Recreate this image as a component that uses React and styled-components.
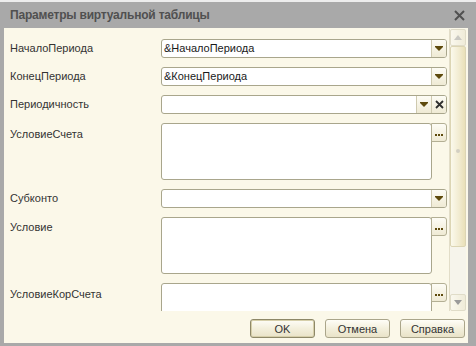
import React from "react";
import styled, { createGlobalStyle } from "styled-components";

const GlobalStyle = createGlobalStyle`
  html, body {
    margin: 0;
    padding: 0;
    background: #fff;
  }
  body {
    font-family: "Liberation Sans", Arial, sans-serif;
  }
`;

const Window = styled.div`
  width: 476px;
  height: 346px;
  box-sizing: border-box;
  background: #a9a9a9;
  border-top: 2px solid #ededed;
  display: flex;
  flex-direction: column;
`;

const TitleBar = styled.div`
  height: 26px;
  flex: none;
  display: flex;
  align-items: center;
  justify-content: space-between;
  padding: 0 11px 0 10px;
`;

const Title = styled.div`
  font-size: 12px;
  font-weight: bold;
  letter-spacing: -0.2px;
  color: #505050;
`;

const Body = styled.div`
  flex: 1;
  margin: 0 8px 3px 4px;
  background: #fbf8e9;
  display: flex;
  flex-direction: column;
  min-height: 0;
`;

const ScrollArea = styled.div`
  height: 282px;
  margin-top: 1px;
  display: flex;
  flex: none;
`;

const Form = styled.div`
  flex: 1;
  overflow: hidden;
  padding: 10px 2px 0 6px;
  display: grid;
  grid-template-columns: 151px 1fr;
  row-gap: 9px;
  align-content: start;
`;

const Label = styled.div`
  font-size: 11px;
  color: #333;
  line-height: 19px;
  height: 19px;
  padding-top: ${(p) => p.$pt || 0}px;
`;

const Combo = styled.div`
  height: 19px;
  box-sizing: border-box;
  border: 1px solid #a9a68c;
  border-radius: 3px;
  background: #fff;
  display: flex;
  overflow: hidden;
`;

const ComboText = styled.div`
  flex: 1;
  font-size: 11px;
  line-height: 17px;
  padding-left: 2px;
  color: #1a1a1a;
`;

const ComboButton = styled.div`
  width: 14px;
  border-left: 1px solid #cfcab0;
  background: linear-gradient(#fdfcf5, #efead4);
  display: flex;
  align-items: center;
  justify-content: center;
`;

const Arrow = styled.div`
  width: 0;
  height: 0;
  border-left: 4px solid transparent;
  border-right: 4px solid transparent;
  border-top: 4px solid #5e4a0c;
  border-bottom: 0;
  position: relative;
  &::before {
    content: "";
    position: absolute;
    left: -4px;
    top: -5px;
    width: 8px;
    height: 1px;
    background: #5e4a0c;
  }
`;

const MemoRow = styled.div`
  display: flex;
  align-items: flex-start;
`;

const Memo = styled.div`
  flex: 1;
  height: 57px;
  box-sizing: border-box;
  border: 1px solid #a9a68c;
  border-radius: 3px;
  background: #fff;
`;

const DotsButton = styled.div`
  width: 16px;
  height: 19px;
  box-sizing: border-box;
  margin-left: -1px;
  border: 1px solid #b3af94;
  border-radius: 0 3px 3px 0;
  background: linear-gradient(#fdfcf5, #efead4);
  display: flex;
  align-items: flex-end;
  justify-content: center;
  padding-bottom: 5px;
  gap: 1px;
`;

const Dot = styled.span`
  width: 2px;
  height: 2px;
  background: #5e4a0c;
`;

const Scrollbar = styled.div`
  width: 16px;
  margin-right: 2px;
  display: flex;
  flex-direction: column;
  background: #f6f4eb;
  border-left: 1px solid #e2ddc8;
`;

const ScrollButton = styled.div`
  height: 17px;
  flex: none;
  box-sizing: border-box;
  border: 1px solid #e0dcc8;
  border-radius: 2px;
  background: linear-gradient(90deg, #faf8ee, #efebd8);
  display: flex;
  align-items: center;
  justify-content: center;
`;

const ScrollArrow = styled.div`
  width: 0;
  height: 0;
  border-left: 4px solid transparent;
  border-right: 4px solid transparent;
  ${(p) =>
    p.$up
      ? "border-bottom: 5px solid #c9c8c2;"
      : "border-top: 5px solid #9a9a9a;"}
`;

const Thumb = styled.div`
  height: 201px;
  flex: none;
  box-sizing: border-box;
  border: 1px solid #dcd5b4;
  border-radius: 2px;
  background: linear-gradient(90deg, #fbf9ec, #f2ecd2 55%, #e9e0b8);
  display: flex;
  justify-content: center;
  padding-top: 102px;
`;

const Grip = styled.span`
  width: 4px;
  height: 4px;
  border-radius: 2px;
  background: #d2cfc2;
`;

const Track = styled.div`
  flex: 1;
`;

const ButtonBar = styled.div`
  display: flex;
  justify-content: flex-end;
  gap: 10px;
  padding: 8px 3px 0 0;
`;

const Button = styled.div`
  width: 65px;
  height: 19px;
  box-sizing: border-box;
  border: 1px solid ${(p) => (p.$default ? "#8e8868" : "#aaa58a")};
  box-shadow: ${(p) => (p.$default ? "inset 0 0 0 1px #d6cfaa" : "none")};
  border-radius: 3px;
  background: linear-gradient(#fefdf7, #f3efdc 50%, #e9e3c8);
  font-size: 11px;
  color: #333;
  display: flex;
  align-items: center;
  justify-content: center;
`;

const ClearX = () => (
  <svg width="9" height="9" viewBox="0 0 9 9">
    <path d="M1 1 L8 8 M8 1 L1 8" stroke="#2e2e2e" strokeWidth="1.8" />
  </svg>
);

const CloseX = () => (
  <svg width="11" height="11" viewBox="0 0 11 11">
    <path d="M1 1 L10 10 M10 1 L1 10" stroke="#505050" strokeWidth="2" />
  </svg>
);

const ComboField = ({ value, clear }) => (
  <Combo>
    <ComboText>{value}</ComboText>
    <ComboButton>
      <Arrow />
    </ComboButton>
    {clear && (
      <ComboButton>
        <ClearX />
      </ComboButton>
    )}
  </Combo>
);

const MemoField = () => (
  <MemoRow>
    <Memo />
    <DotsButton>
      <Dot />
      <Dot />
      <Dot />
    </DotsButton>
  </MemoRow>
);

const App = () => (
  <>
    <GlobalStyle />
    <Window>
      <TitleBar>
        <Title>Параметры виртуальной таблицы</Title>
        <CloseX />
      </TitleBar>
      <Body>
        <ScrollArea>
          <Form>
            <Label>НачалоПериода</Label>
            <ComboField value="&НачалоПериода" />
            <Label>КонецПериода</Label>
            <ComboField value="&КонецПериода" />
            <Label>Периодичность</Label>
            <ComboField value="" clear />
            <Label $pt={2}>УсловиеСчета</Label>
            <MemoField />
            <Label>Субконто</Label>
            <ComboField value="" />
            <Label $pt={1}>Условие</Label>
            <MemoField />
            <Label $pt={2}>УсловиеКорСчета</Label>
            <MemoField />
          </Form>
          <Scrollbar>
            <ScrollButton>
              <ScrollArrow $up />
            </ScrollButton>
            <Thumb>
              <Grip />
            </Thumb>
            <Track />
            <ScrollButton>
              <ScrollArrow />
            </ScrollButton>
          </Scrollbar>
        </ScrollArea>
        <ButtonBar>
          <Button $default>OK</Button>
          <Button>Отмена</Button>
          <Button>Справка</Button>
        </ButtonBar>
      </Body>
    </Window>
  </>
);

export default App;
